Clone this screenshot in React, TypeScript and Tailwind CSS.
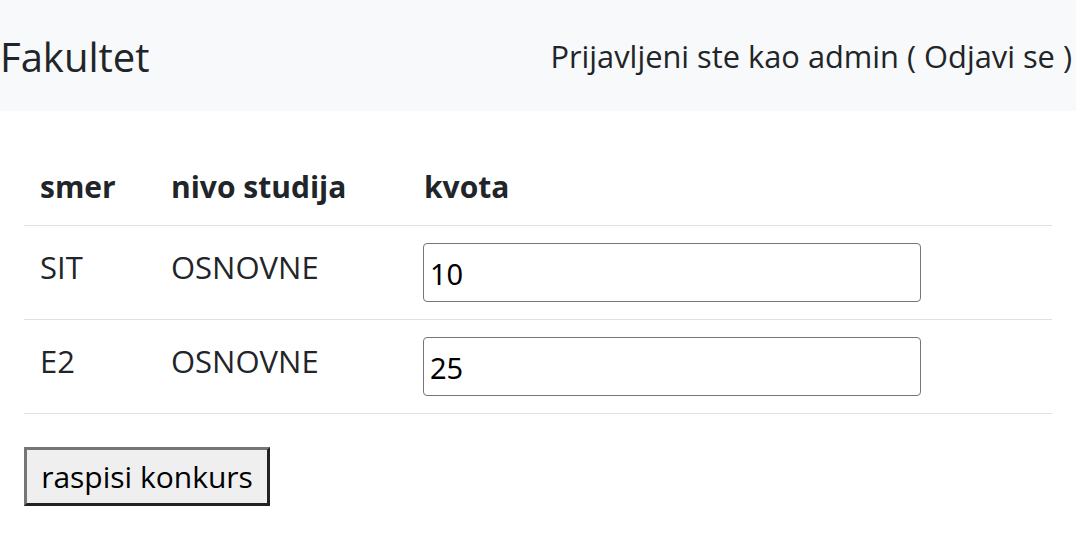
import React from "react";

const rows = [
  { smer: "SIT", nivo: "OSNOVNE", kvota: "10" },
  { smer: "E2", nivo: "OSNOVNE", kvota: "25" },
];

export default function App() {
  return (
    <div className="min-h-[557px] bg-white text-[#212529] [font-family:'Open_Sans',sans-serif]">
      <nav className="flex h-[111px] items-center justify-between bg-[#f8f9fa] pr-[4px]">
        <span className="text-[40px] leading-none pt-[2px]">Fakultet</span>
        <span className="text-[30.8px] leading-none pt-[2px]">Prijavljeni ste kao admin ( Odjavi se )</span>
      </nav>
      <div className="px-[24px] pt-[46px]">
        <table className="w-full border-collapse text-left text-[31px]">
          <thead>
            <tr className="border-b border-[#dee2e6]">
              <th className="w-[131px] px-[16px] pt-[12px] pb-[20px] align-bottom text-[30px] font-bold leading-[36px]">smer</th>
              <th className="w-[253px] px-[16px] pt-[12px] pb-[20px] align-bottom text-[30px] font-bold leading-[36px]">nivo studija</th>
              <th className="px-[16px] pt-[12px] pb-[20px] align-bottom text-[30px] font-bold leading-[36px]">kvota</th>
            </tr>
          </thead>
          <tbody>
            {rows.map((r) => (
              <tr key={r.smer} className="border-b border-[#dee2e6]">
                <td className="h-[94px] px-[16px] pt-[21px] align-top leading-[40px]">{r.smer}</td>
                <td className="px-[16px] pt-[21px] align-top leading-[40px]">{r.nivo}</td>
                <td className="pl-[15px] pt-[17px] pb-[17px] align-top">
                  <input
                    defaultValue={r.kvota}
                    className="block h-[59px] w-[498px] rounded-[4px] border border-[#767676] bg-white px-[6px] pt-[1px] text-[29px] text-black outline-none [font-family:'Noto_Sans',sans-serif]"
                  />
                </td>
              </tr>
            ))}
          </tbody>
        </table>
        <button className="mt-[33px] h-[59px] w-[246px] border-[3px] border-t-[#767676] border-l-[#767676] border-r-[#222] border-b-[#222] bg-[#efefef] text-[30px] text-black [border-style:solid]">
          raspisi konkurs
        </button>
      </div>
    </div>
  );
}
